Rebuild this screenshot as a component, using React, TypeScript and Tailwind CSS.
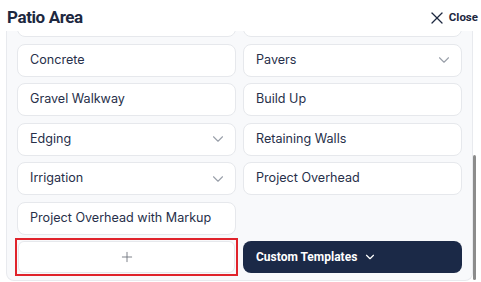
import { ChevronDown, Plus, X } from 'lucide-react';

const ROWS: { left?: { label: string; chevron?: boolean }; right?: { label: string; chevron?: boolean } }[] = [
  { left: { label: '' }, right: { label: '' } },
  { left: { label: 'Concrete' }, right: { label: 'Pavers', chevron: true } },
  { left: { label: 'Gravel Walkway' }, right: { label: 'Build Up' } },
  { left: { label: 'Edging', chevron: true }, right: { label: 'Retaining Walls' } },
  { left: { label: 'Irrigation', chevron: true }, right: { label: 'Project Overhead' } },
  { left: { label: 'Project Overhead with Markup' } },
];

function Item({ label, chevron }: { label: string; chevron?: boolean }) {
  return (
    <div className="h-[33px] flex items-center justify-between pl-[12px] pr-[8px] bg-white border border-[#e6e8ec] rounded-lg text-[12.6px] text-[#27304a]">
      <span>{label}</span>
      {chevron && <ChevronDown className="w-[18px] h-[18px] text-[#9aa0aa]" strokeWidth={1.5} />}
    </div>
  );
}

export default function App() {
  return (
    <div className="w-[481px] h-[282px] bg-white overflow-hidden relative" style={{ fontFamily: 'Inter, "Noto Sans", sans-serif' }}>
      {/* Header */}
      <div className="h-[31px] flex items-center justify-between pl-[7px] pr-[3px] pt-[5px]">
        <h1 className="text-[17px] font-bold text-[#1d2840] tracking-[-0.4px]" style={{ fontFamily: 'Roboto, sans-serif' }}>Patio Area</h1>
        <button className="flex items-center gap-[2px] text-[11.5px] font-bold text-[#1d2840]" style={{ fontFamily: 'Roboto, sans-serif' }}>
          <X className="w-[20px] h-[20px]" strokeWidth={1.5} />
          Close
        </button>
      </div>

      {/* Scroll area */}
      <div className="ml-[6px] w-[467px] h-[250px] bg-[#f8f9fb] border-x border-b border-[#e8eaee] rounded-b-lg overflow-hidden">
        <div className="-mt-[27px] px-[10px] flex flex-col gap-[6.5px]">
          {ROWS.map((row, i) => (
            <div key={i} className="grid grid-cols-2 gap-[7px]">
              {row.left ? <Item {...row.left} /> : <div />}
              {row.right ? <Item {...row.right} /> : <div />}
            </div>
          ))}
          <div className="grid grid-cols-2 gap-[7px] items-start">
            <div className="-mt-[3px] -mx-[2px] border-2 border-[#e0232b] p-[1px] h-[38px]">
              <button className="w-full h-full flex items-center justify-center bg-white border border-[#e6e8ec] rounded-md text-[#6b6f78]">
                <Plus className="w-[16px] h-[16px]" strokeWidth={1.3} />
              </button>
            </div>
            <button className="h-8 flex items-center gap-[6px] pl-[13px] bg-[#1b2947] rounded-lg text-white text-[12px] font-bold" style={{ fontFamily: 'Roboto, sans-serif' }}>
              Custom Templates
              <ChevronDown className="w-[14px] h-[14px]" strokeWidth={2} />
            </button>
          </div>
        </div>
      </div>

      {/* scrollbar thumb */}
      <div className="absolute left-[473px] top-[155px] w-[3px] h-[125px] bg-[#8c8c8c] rounded-sm" />
    </div>
  );
}
